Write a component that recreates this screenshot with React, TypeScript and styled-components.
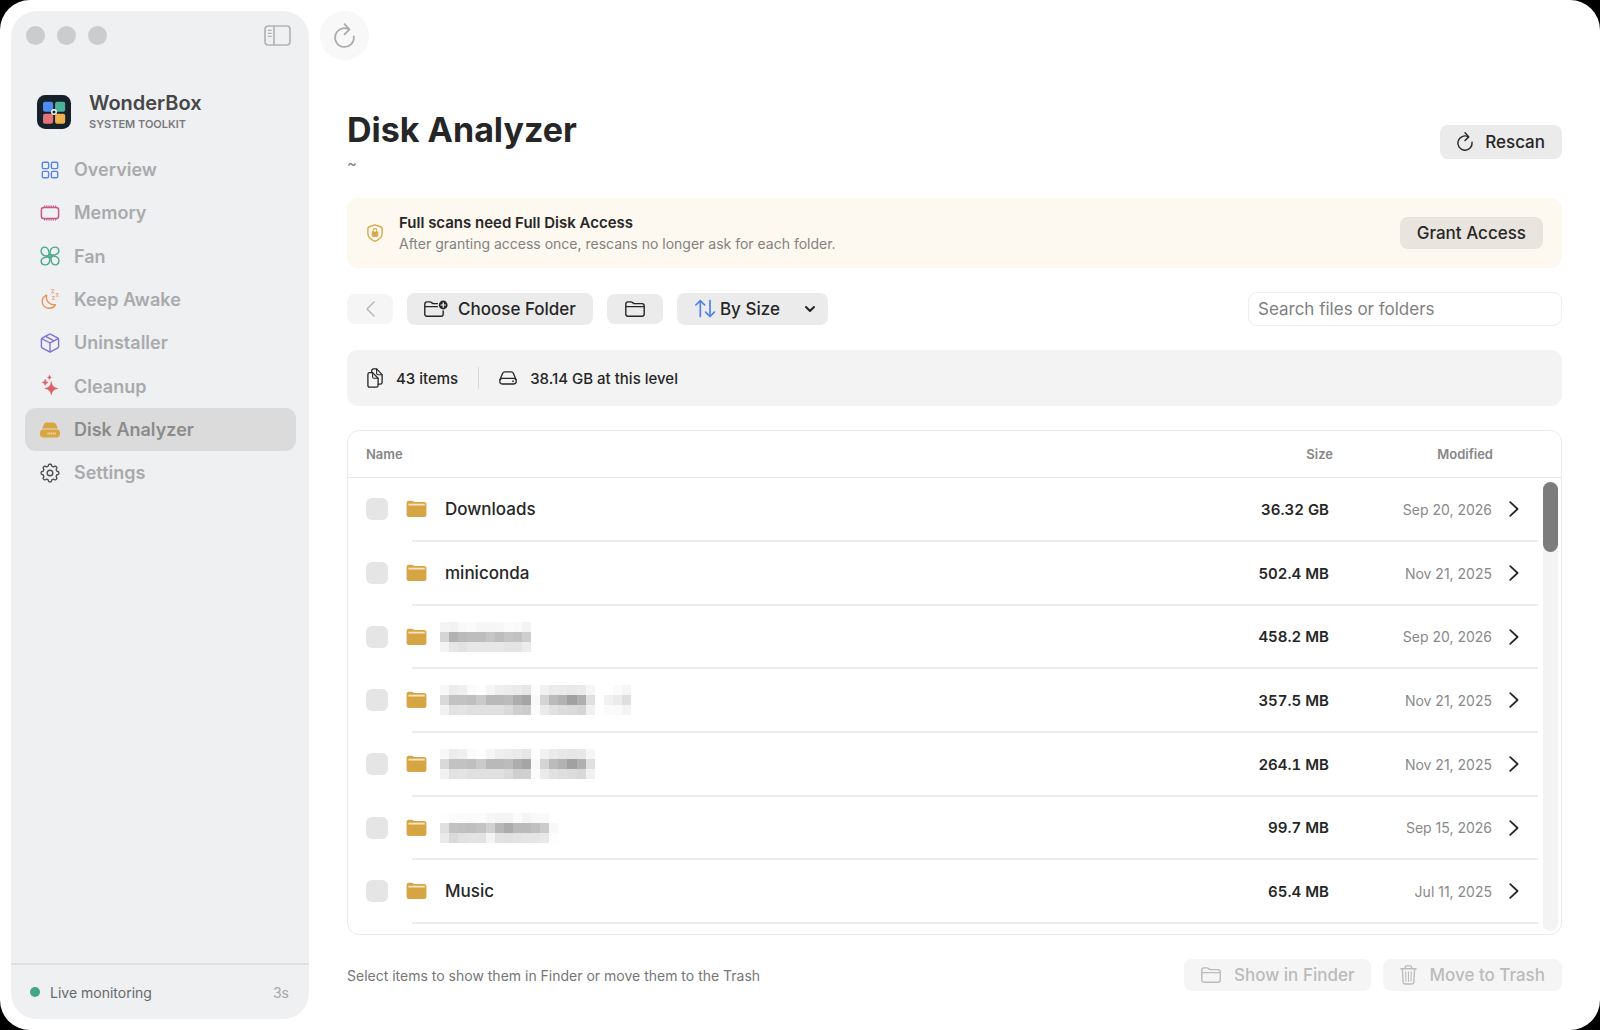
import React from "react";
import styled, { createGlobalStyle } from "styled-components";

const Global = createGlobalStyle`
  *, *::before, *::after { box-sizing: border-box; }
  html, body { margin: 0; background: #000; }
  body, button, input, select { font-family: Inter, "Liberation Sans", sans-serif; }
  svg { display: block; flex: none; overflow: visible; }
`;

const Window = styled.div`
  display: flex;
  min-height: 100vh;
  padding: 11px;
  background: #fff;
  border-radius: 30px;
  color: #262626;
`;

/* ---------- sidebar ---------- */

const Sidebar = styled.aside`
  display: flex;
  flex-direction: column;
  flex: none;
  width: 298px;
  background: #eff0f2;
  border-radius: 26px;
`;

const TitleBar = styled.div`
  display: flex;
  align-items: center;
  gap: 12px;
  height: 48px;
  padding: 0 18px 0 15px;
`;

const Light = styled.span`
  width: 19px;
  height: 19px;
  border-radius: 50%;
  background: #cbcccd;
`;

const PlainButton = styled.button`
  display: flex;
  padding: 0;
  border: 0;
  background: none;
  color: inherit;
`;

const ToggleButton = styled(PlainButton)`
  margin-left: auto;
  color: #b3b4b6;
`;

const Brand = styled.div`
  display: flex;
  align-items: center;
  gap: 18px;
  padding: 32px 26px 15px;
`;

const BrandName = styled.div`
  font-size: 20px;
  line-height: 24px;
  font-weight: 600;
  color: #454648;
`;

const BrandSub = styled.div`
  font-size: 11px;
  line-height: 18px;
  font-weight: 600;
  color: #78797b;
`;

const NavList = styled.ul`
  margin: 0;
  padding: 0 13px 0 14px;
  list-style: none;
`;

const NavItem = styled.li`
  height: 43px;
  &:nth-child(3n) { height: 44px; }
`;

const NavLink = styled.a<{ $active?: boolean }>`
  display: flex;
  align-items: center;
  gap: 14px;
  height: 100%;
  padding: 0 15px;
  border-radius: 11px;
  font-size: 18px;
  font-weight: 600;
  text-decoration: none;
  color: ${(p) => (p.$active ? "#8b8b8b" : "#a9aaac")};
  background: ${(p) => (p.$active ? "#dbdbdb" : "transparent")};
`;

const SideFooter = styled.div`
  display: flex;
  align-items: center;
  gap: 10px;
  height: 56px;
  margin-top: auto;
  padding: 0 20px 0 19px;
  border-top: 2px solid #dedfe1;
  font-size: 14px;
  color: #68696b;
`;

const Dot = styled.span`
  width: 10px;
  height: 10px;
  border-radius: 50%;
  background: #45a48a;
`;

const Interval = styled.span`
  margin-left: auto;
  color: #a6a7a9;
`;

/* ---------- main ---------- */

const Main = styled.main`
  display: flex;
  flex-direction: column;
  flex: 1;
  min-width: 0;
  padding: 0 11px 28px;
`;

const RoundButton = styled.button`
  display: grid;
  place-items: center;
  width: 49px;
  height: 49px;
  padding: 0;
  border: 0;
  border-radius: 50%;
  background: #f8f8f8;
  color: #acacac;
`;

const Content = styled.div`
  display: flex;
  flex-direction: column;
  flex: 1;
  gap: 24px;
  padding: 49px 16px 0 27px;
`;

const Header = styled.header`
  display: flex;
  align-items: center;
  justify-content: space-between;
`;

const Title = styled.h1`
  margin: 0;
  font-size: 34px;
  line-height: 42px;
  font-weight: 700;
`;

const Path = styled.div`
  margin-top: 3px;
  font-size: 15px;
  line-height: 20px;
  color: #808080;
`;

const Button = styled.button<{ $tone?: string; $gap?: number; $tall?: boolean }>`
  display: flex;
  align-items: center;
  gap: ${(p) => p.$gap ?? 12}px;
  height: ${(p) => (p.$tall ? 34 : 32)}px;
  padding: 0 17px;
  border: 0;
  border-radius: 8px;
  background: ${(p) => p.$tone ?? "#ebebeb"};
  color: #262626;
  font-size: 17px;
  font-weight: 500;
  white-space: nowrap;
  &:disabled {
    background: #f5f5f5;
    color: #bbb;
  }
`;

const IconButton = styled(Button)<{ $width: number }>`
  justify-content: center;
  width: ${(p) => p.$width}px;
  height: 30px;
  padding: 0;
`;

const Notice = styled.section`
  display: flex;
  align-items: center;
  gap: 16px;
  height: 70px;
  padding: 0 19px 0 20px;
  border-radius: 11px;
  background: #fdf8f0;
`;

const NoticeText = styled.div`
  flex: 1;
  line-height: 21px;
`;

const NoticeTitle = styled.div`
  font-size: 15px;
  font-weight: 600;
`;

const NoticeBody = styled.div`
  font-size: 14px;
  color: #83817e;
`;

const Toolbar = styled.div`
  display: flex;
  align-items: center;
  gap: 14px;
  height: 34px;
`;

const SortBox = styled.label`
  display: flex;
  align-items: center;
  gap: 5px;
  height: 32px;
  padding: 0 13px 0 18px;
  border-radius: 8px;
  background: #ebebeb;
`;

const SortSelect = styled.select`
  appearance: none;
  margin: 0 20px 0 0;
  padding: 0;
  border: 0;
  background: none;
  color: #262626;
  font-size: 17px;
  font-weight: 500;
`;

const Search = styled.input`
  width: 314px;
  height: 34px;
  margin-left: auto;
  padding: 0 9px;
  border: 1px solid #ededed;
  border-radius: 9px;
  background: #fff;
  color: #262626;
  font-size: 17px;
  &::placeholder { color: #808080; opacity: 1; }
`;

const Summary = styled.div`
  display: flex;
  align-items: center;
  height: 56px;
  padding: 0 20px;
  border-radius: 11px;
  background: #f3f3f3;
  font-size: 15px;
  font-weight: 500;
`;

const SummaryItem = styled.span`
  display: flex;
  align-items: center;
  gap: 13px;
`;

const Rule = styled.span`
  width: 1px;
  height: 22px;
  margin: 0 20px;
  background: #d9d9d9;
`;

const Panel = styled.section`
  position: relative;
  flex: 1;
  border: 1px solid #ebebeb;
  border-radius: 12px;
`;

const Table = styled.table`
  width: 100%;
  table-layout: fixed;
  border-collapse: separate;
  border-spacing: 0;
`;

const Col = styled.col<{ $width?: number }>`
  ${(p) => (p.$width ? `width: ${p.$width}px;` : "")}
`;

const Th = styled.th<{ $right?: boolean }>`
  height: 47px;
  padding: 0 0 0 ${(p) => (p.$right ? 0 : 18)}px;
  border-bottom: 1px solid #e6e6e6;
  font-size: 13px;
  font-weight: 600;
  color: #868686;
  text-align: ${(p) => (p.$right ? "right" : "left")};
`;

const Row = styled.tr`
  height: 64px;
  background: linear-gradient(#ececec, #ececec) no-repeat 64px 100% / calc(100% - 87px) 2px;
  &:nth-child(3n) { height: 63px; }
`;

const Td = styled.td`
  padding: 0 0 2px;
`;

const NameCell = styled.div`
  display: flex;
  align-items: center;
  gap: 18px;
  padding-left: 18px;
`;

const Check = styled.input`
  appearance: none;
  width: 22px;
  height: 22px;
  margin: 0;
  border-radius: 6px;
  background: #e5e5e5;
`;

const FileName = styled.span`
  font-size: 17px;
  font-weight: 500;
`;

const Redacted = styled.span`
  margin-left: -5px;
`;

const SizeCell = styled(Td)`
  padding-right: 4px;
  font-size: 15px;
  font-weight: 600;
  font-variant-numeric: tabular-nums;
  text-align: right;
`;

const DateCell = styled(Td)`
  padding-right: 1px;
  font-size: 14px;
  color: #898989;
  text-align: right;
`;

const OpenCell = styled(Td)`
  padding-left: 16px;
`;

const Track = styled.div`
  position: absolute;
  top: 51px;
  right: 3px;
  bottom: 3px;
  width: 15px;
  border-radius: 8px;
  background: #f3f3f3;
`;

const Thumb = styled.div`
  height: 70px;
  border-radius: 8px;
  background: #7c7c7c;
`;

const Footer = styled.footer`
  display: flex;
  align-items: center;
  gap: 12px;
`;

const Hint = styled.p`
  flex: 1;
  margin: 0;
  font-size: 14px;
  color: #767676;
`;

/* ---------- icons ---------- */

type IconProps = { w?: number; h?: number; vb?: string; sw?: number; color?: string; children: React.ReactNode };

const Icon = ({ w = 20, h = 20, vb, sw = 1.4, color = "currentColor", children }: IconProps) => (
  <svg width={w} height={h} viewBox={vb ?? `0 0 ${w} ${h}`} fill="none" stroke={color} strokeWidth={sw}
    strokeLinecap="round" strokeLinejoin="round" aria-hidden="true">
    {children}
  </svg>
);

const Logo = () => (
  <svg width="34" height="34" viewBox="0 0 35 35" aria-hidden="true">
    <rect width="35" height="35" rx="8.5" fill="#16212c" />
    <rect x="6.2" y="7" width="10.4" height="10.2" rx="2" fill="#4f8cf2" />
    <rect x="18.6" y="7" width="10.4" height="10.2" rx="2" fill="#4bb29b" />
    <rect x="6.2" y="19.4" width="10.4" height="10.2" rx="2" fill="#e27377" />
    <rect x="18.6" y="19.4" width="10.4" height="10.2" rx="2" fill="#efb14b" />
    <circle cx="17.5" cy="17.5" r="2.3" fill="#16212c" stroke="#fff" strokeWidth="1.4" />
  </svg>
);

const SidebarIcon = () => (
  <Icon w={27} h={21} sw={1.7}>
    <rect x="1" y="1" width="25" height="19" rx="3.2" />
    <path d="M10 1v19" />
    <path d="M4.4 5.4h2.8M4.4 8.4h2.8M4.4 11.4h2.8" strokeWidth="1.3" />
  </Icon>
);

const ReloadIcon = ({ w, h, sw }: { w: number; h: number; sw: number }) => (
  <Icon w={w} h={h} vb="2.5 0 19 22.6" sw={sw}>
    <path d="M20.4 12.2A8.5 8.5 0 1 1 15.8 5.6" />
    <path d="M12 1L16.5 5.8L12 10.2" />
  </Icon>
);

const GridIcon = () => (
  <Icon color="#5484ee">
    <rect x="2.3" y="2.3" width="6.3" height="6.3" rx="1.3" />
    <rect x="11.4" y="2.3" width="6.3" height="6.3" rx="1.3" />
    <rect x="2.3" y="11.4" width="6.3" height="6.3" rx="1.3" />
    <rect x="11.4" y="11.4" width="6.3" height="6.3" rx="1.3" />
  </Icon>
);

const MemoryIcon = () => (
  <Icon color="#c9588c" sw={1.5}>
    <rect x="1.4" y="4.4" width="17.2" height="11.2" rx="2.4" />
    <path strokeWidth="1.2" strokeLinecap="butt" d="M4.6 2.4v2M6.8 2.4v2M9 2.4v2M11.2 2.4v2M13.4 2.4v2M15.6 2.4v2M4.6 15.6v2M6.8 15.6v2M9 15.6v2M11.2 15.6v2M13.4 15.6v2M15.6 15.6v2" />
  </Icon>
);

const FanIcon = () => (
  <Icon color="#48a78c" sw={1.4}>
    {[0, 90, 180, 270].map((a) => (
      <path key={a} transform={`rotate(${a} 10 10)`}
        d="M10.2 8.1C9.6 4.8 11 1.1 14.6 1.1C17.4 1.1 18.9 2.8 18.9 4.9C18.9 7.8 15.4 8.9 11.8 9.3" />
    ))}
    <circle cx="10" cy="10" r="1.9" />
    <circle cx="10" cy="10" r="0.4" />
  </Icon>
);

const MoonIcon = () => (
  <Icon color="#e9935c">
    <path d="M6.6 5.2C3.6 6.5 2 9.2 2.3 12.2C2.7 15.9 5.8 18.5 9.6 18.3C12.2 18.1 14.4 16.7 15.4 14.6C9.8 15.6 5.4 11.1 6.6 5.2Z" />
    <g strokeWidth="0.9" opacity="0.8">
      <path d="M11.4 -0.4h2.6l-2.6 3.2h2.6" />
      <path d="M16.2 3.6h2l-2 2.6h2" />
      <path d="M12.4 6.6h2l-2 2.8h2" />
    </g>
  </Icon>
);

const BoxIcon = () => (
  <Icon color="#8070da">
    <path d="M9.1 1.3L2.5 4.8Q1.4 5.4 1.4 6.6V13.5Q1.4 14.6 2.5 15.2L9.1 18.7Q10 19.2 10.9 18.7L17.5 15.2Q18.6 14.6 18.6 13.5V6.6Q18.6 5.4 17.5 4.8L10.9 1.3Q10 0.8 9.1 1.3Z" />
    <path d="M1.8 5.6L10 10L18.2 5.6M10 10V18.8M5.7 3.3L14 7.8" />
  </Icon>
);

const star = (x: number, y: number, r: number) =>
  `M${x} ${y - r}Q${x + r * 0.14} ${y - r * 0.14} ${x + r} ${y}Q${x + r * 0.14} ${y + r * 0.14} ${x} ${y + r}Q${x - r * 0.14} ${y + r * 0.14} ${x - r} ${y}Q${x - r * 0.14} ${y - r * 0.14} ${x} ${y - r}Z`;

const SparkleIcon = () => (
  <Icon color="#da636b" sw={0.5}>
    <path fill="#da636b" d={star(11.3, 12.4, 6.5) + star(5.2, 6.4, 3) + star(9.5, 1.5, 2)} />
  </Icon>
);

const DriveFillIcon = () => (
  <svg width="20" height="20" viewBox="0 0 20 20" aria-hidden="true">
    <path d="M2 8.4L4.1 3.9Q4.8 2.4 6.4 2.4H13.6Q15.2 2.4 15.9 3.9L18 8.4Z" fill="#d9a542" />
    <rect x="0" y="9.4" width="20" height="8" rx="3.4" fill="#d9a542" />
    <path d="M7.5 13.4H16.5" stroke="#f0d8a4" strokeWidth="2" strokeDasharray="1.2 0.6" />
  </svg>
);

const gear = Array.from({ length: 160 }, (_, i) => {
  const a = (i / 160) * Math.PI * 2;
  const r = 7.9 + 0.95 * Math.tanh(2.2 * Math.cos(8 * a));
  return `${(10 + r * Math.sin(a)).toFixed(2)},${(10 - r * Math.cos(a)).toFixed(2)}`;
}).join(" ");

const GearIcon = () => (
  <Icon color="#505153" sw={1.4}>
    <polygon points={gear} />
    <circle cx="10" cy="10" r="2.8" />
  </Icon>
);

const ShieldIcon = () => (
  <Icon w={16} h={18} color="#dba748" sw={1.4}>
    <path d="M8 0.8L14.2 3Q15.1 3.4 15.1 4.4V9.6C15.1 13.2 12.2 15.7 8 17.3C3.8 15.7 0.9 13.2 0.9 9.6V4.4Q0.9 3.4 1.8 3Z" />
    <rect x="5.2" y="8" width="5.6" height="4.4" rx="0.5" fill="#dba748" strokeWidth="0.8" />
    <path d="M6.2 8V6.4a1.8 1.8 0 0 1 3.6 0V8" strokeWidth="1.1" />
  </Icon>
);

const FolderShape = () => (
  <>
    <path d="M0.8 3.2Q0.8 0.9 3 0.9H5.8Q6.8 0.9 7.5 1.5L8.2 2.1Q8.8 2.6 9.8 2.6H17Q19.2 2.6 19.2 4.8V13Q19.2 15.2 17 15.2H3Q0.8 15.2 0.8 13Z" />
    <path d="M1 5.7H19" strokeWidth="1.2" />
  </>
);

const FolderIcon = () => (
  <Icon h={16} sw={1.4}><FolderShape /></Icon>
);

const FolderPlusIcon = () => (
  <Icon w={24} h={16} sw={1.4}>
    <FolderShape />
    <circle cx="19" cy="4" r="5.4" fill="#ebebeb" stroke="none" />
    <circle cx="19.2" cy="4" r="4.4" fill="currentColor" stroke="none" />
    <path d="M19.2 1.8v4.4M17 4h4.4" stroke="#fff" strokeWidth="1.2" />
  </Icon>
);

const FolderFillIcon = () => (
  <svg width="21" height="18" viewBox="0 0 21 18" aria-hidden="true">
    <path d="M0.6 3Q0.6 0.8 2.6 0.8H5.4Q6.4 0.8 7 1.3Q7.7 1.9 8.6 1.9H18.2Q20.4 1.9 20.4 4.1V15Q20.4 17 18.2 17H2.8Q0.6 17 0.6 15Z" fill="#d7a444" />
    <path d="M2.4 4.6H18.8" stroke="#f7e6c4" strokeWidth="1.8" />
  </svg>
);

const DocsIcon = () => (
  <Icon w={16} h={20} sw={1.3}>
    <path d="M4.7 4.6V2.8Q4.7 0.9 6.5 0.9H9.6L15.1 6.6V14.4Q15.1 16.2 13.3 16.2H11.3" />
    <path d="M9.6 1.1V5.2Q9.6 6.7 11 6.7H15" strokeWidth="1.1" />
    <path d="M0.9 6.4Q0.9 4.6 2.7 4.6H5.6L11.1 10.2V17.4Q11.1 19.1 9.3 19.1H2.7Q0.9 19.1 0.9 17.4Z" />
    <path d="M5.6 4.8V8.8Q5.6 10.3 7 10.3H11" strokeWidth="1.1" />
  </Icon>
);

const DriveIcon = () => (
  <Icon w={18} h={14} sw={1.3}>
    <path d="M1 8.8L3.5 2.6Q4.2 0.9 5.8 0.9H12.2Q13.8 0.9 14.5 2.6L17 8.8" />
    <rect x="0.8" y="7.4" width="16.4" height="5.6" rx="2.4" />
    <circle cx="14" cy="10.2" r="0.3" />
  </Icon>
);

const SortIcon = () => (
  <Icon color="#4f83f0" sw={1.7}>
    <path d="M5.3 17.5V1.6M0.9 6L5.3 1.6L9.7 6" />
    <path d="M15 1.6V17.5M10.6 13.1L15 17.5L19.4 13.1" />
  </Icon>
);

const TrashIcon = () => (
  <Icon w={17} h={20}>
    <path d="M0.9 3.8H16.1M5.3 3.6V2.4Q5.3 0.9 6.8 0.9H10.2Q11.7 0.9 11.7 2.4V3.6" />
    <path d="M2.4 4L3.1 17.2Q3.2 19 5 19H12Q13.8 19 13.9 17.2L14.6 4" />
    <path d="M5.7 6.8L6 16.2M8.5 6.8V16.2M11.3 6.8L11 16.2" strokeWidth="1.1" />
  </Icon>
);

/* ---------- pixelated names ---------- */

const Mosaic = ({ rows }: { rows: string[] }) => {
  const cols = rows[1].split(" ").length;
  return (
    <Redacted>
      <svg width={cols * 9} height="30" viewBox={`0 0 ${cols * 9} 30`} shapeRendering="crispEdges" role="img" aria-label="Hidden folder name">
        {rows.map((row, y) =>
          row.split(" ").map((g, x) => (
            <rect key={`${x}-${y}`} x={x * 9.1} y={y * 10} width="9.2" height="10" fill={`#${g}${g}${g}`} />
          ))
        )}
      </svg>
    </Redacted>
  );
};

/* ---------- data ---------- */

const nav: [string, () => React.ReactElement][] = [
  ["Overview", GridIcon],
  ["Memory", MemoryIcon],
  ["Fan", FanIcon],
  ["Keep Awake", MoonIcon],
  ["Uninstaller", BoxIcon],
  ["Cleanup", SparkleIcon],
  ["Disk Analyzer", DriveFillIcon],
  ["Settings", GearIcon],
];

type Entry = { name?: string; mosaic?: string[]; size: string; date: string };

const entries: Entry[] = [
  { name: "Downloads", size: "36.32 GB", date: "Sep 20, 2026" },
  { name: "miniconda", size: "502.4 MB", date: "Nov 21, 2025" },
  {
    mosaic: [
      "f4 f2 f9 fb f6 f6 f7 fb f9 f4",
      "d5 b2 ba bd bd c5 bd c5 c2 ce",
      "f3 e6 e2 e7 e7 e7 e7 e4 e4 ec",
    ],
    size: "458.2 MB", date: "Sep 20, 2026",
  },
  {
    mosaic: [
      "f7 ec ef fb fe f6 ee ec ea e6 fd f1 eb eb e8 eb f6 ff ff fa f6",
      "d9 c2 c2 bf ca b9 b9 bc ad a4 f8 d4 bb b2 a1 b0 e0 ff f1 eb df",
      "f0 e2 e4 e0 e0 e0 e0 da cf cc fb ea e1 dc da d5 f1 ff fb fa f4",
    ],
    size: "357.5 MB", date: "Nov 21, 2025",
  },
  {
    mosaic: [
      "f7 ec ef fb fe f6 ee ec ea e6 fd f1 eb e8 e6 e8 f6",
      "d9 c2 c2 bf ca b9 b9 bc ad a4 f8 d4 bb b2 a1 b0 e0",
      "f0 e2 e4 e0 e0 e0 e0 da cf d0 fb ea e1 de dc d8 f1",
    ],
    size: "264.1 MB", date: "Nov 21, 2025",
  },
  {
    mosaic: [
      "fe fb fb fa fb f6 f4 f4 fb f5 f9 f9 ff",
      "e0 c2 c0 be c3 d1 b7 ac ba ba c0 cb f8",
      "e9 da e1 e3 e3 f4 e2 e1 e3 e5 e5 e8 fd",
    ],
    size: "99.7 MB", date: "Sep 15, 2026",
  },
  { name: "Music", size: "65.4 MB", date: "Jul 11, 2025" },
];

export default function App() {
  return (
    <Window>
      <Global />
      <Sidebar>
        <TitleBar>
          <Light />
          <Light />
          <Light />
          <ToggleButton aria-label="Toggle sidebar"><SidebarIcon /></ToggleButton>
        </TitleBar>
        <Brand>
          <Logo />
          <div>
            <BrandName>WonderBox</BrandName>
            <BrandSub>SYSTEM TOOLKIT</BrandSub>
          </div>
        </Brand>
        <nav>
          <NavList>
            {nav.map(([label, Glyph]) => (
              <NavItem key={label}>
                <NavLink href="#" $active={label === "Disk Analyzer"}>
                  <Glyph />
                  {label}
                </NavLink>
              </NavItem>
            ))}
          </NavList>
        </nav>
        <SideFooter>
          <Dot />
          Live monitoring
          <Interval>3s</Interval>
        </SideFooter>
      </Sidebar>

      <Main>
        <RoundButton aria-label="Refresh"><ReloadIcon w={21} h={25} sw={1.6} /></RoundButton>
        <Content>
          <Header>
            <div>
              <Title>Disk Analyzer</Title>
              <Path>~</Path>
            </div>
            <Button $tall><ReloadIcon w={16} h={19} sw={1.7} />Rescan</Button>
          </Header>

          <Notice>
            <ShieldIcon />
            <NoticeText>
              <NoticeTitle>Full scans need Full Disk Access</NoticeTitle>
              <NoticeBody>After granting access once, rescans no longer ask for each folder.</NoticeBody>
            </NoticeText>
            <Button $tone="#e9e4dd">Grant Access</Button>
          </Notice>

          <Toolbar>
            <IconButton $width={46} disabled aria-label="Back">
              <Icon w={9} h={16} sw={1.6}><path d="M8 1L1 8L8 15" /></Icon>
            </IconButton>
            <Button $gap={10}><FolderPlusIcon />Choose Folder</Button>
            <IconButton $width={56} aria-label="Open folder"><FolderIcon /></IconButton>
            <SortBox>
              <SortIcon />
              <SortSelect aria-label="Sort order" defaultValue="size">
                <option value="size">By Size</option>
              </SortSelect>
              <Icon w={10} h={6} sw={2}><path d="M1 1L5 5L9 1" /></Icon>
            </SortBox>
            <Search type="text" aria-label="Search" placeholder="Search files or folders" />
          </Toolbar>

          <Summary>
            <SummaryItem><DocsIcon />43 items</SummaryItem>
            <Rule />
            <SummaryItem><DriveIcon />38.14 GB at this level</SummaryItem>
          </Summary>

          <Panel>
            <Table>
              <colgroup>
                <Col />
                <Col $width={140} />
                <Col $width={160} />
                <Col $width={68} />
              </colgroup>
              <thead>
                <tr>
                  <Th>Name</Th>
                  <Th $right>Size</Th>
                  <Th $right>Modified</Th>
                  <Th aria-label="Open" />
                </tr>
              </thead>
              <tbody>
                {entries.map((e, i) => (
                  <Row key={i}>
                    <Td>
                      <NameCell>
                        <Check type="checkbox" aria-label={e.name ?? "Hidden folder"} />
                        <FolderFillIcon />
                        {e.name ? <FileName>{e.name}</FileName> : <Mosaic rows={e.mosaic!} />}
                      </NameCell>
                    </Td>
                    <SizeCell>{e.size}</SizeCell>
                    <DateCell>{e.date}</DateCell>
                    <OpenCell>
                      <PlainButton aria-label="Open">
                        <Icon w={10} h={16} sw={1.8}><path d="M1.2 1.2L8.6 8L1.2 14.8" /></Icon>
                      </PlainButton>
                    </OpenCell>
                  </Row>
                ))}
              </tbody>
            </Table>
            <Track><Thumb /></Track>
          </Panel>

          <Footer>
            <Hint>Select items to show them in Finder or move them to the Trash</Hint>
            <Button $gap={13} disabled><FolderIcon />Show in Finder</Button>
            <Button disabled><TrashIcon />Move to Trash</Button>
          </Footer>
        </Content>
      </Main>
    </Window>
  );
}
